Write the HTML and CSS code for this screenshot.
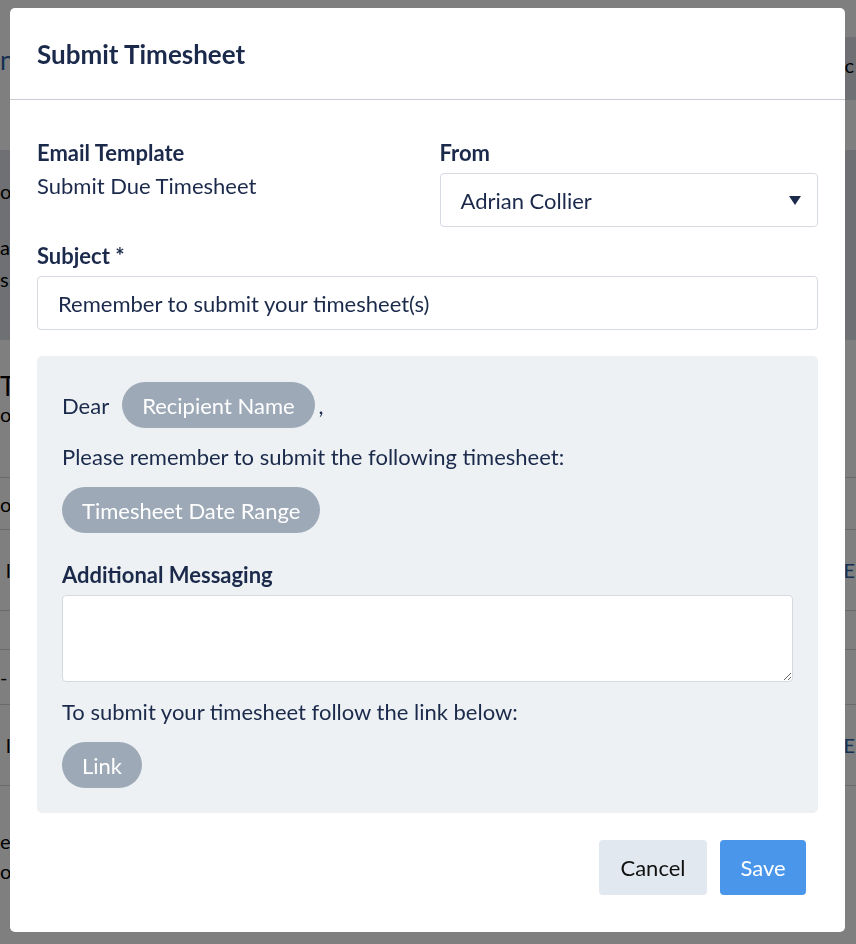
FILE: index.html
```html
<!DOCTYPE html>
<html lang="en">
<head>
  <meta charset="UTF-8" />
  <meta name="viewport" content="width=device-width, initial-scale=1.0"/>
  <title>Submit Timesheet</title>
  <link rel="stylesheet" href="styles.css">
</head>
<body>

  <!-- page behind the dialog -->
  <div class="page">
    <header class="page-head">
      <span class="page-title">n</span>
      <span class="page-tab">c</span>
    </header>

    <section class="page-band">
      <p>o</p>
      <p>a</p>
      <p>s</p>
    </section>

    <section class="page-list">
      <div class="list-head">
        <span class="list-title">T</span>
        <span>o</span>
      </div>
      <div class="list-row row-a"><span>o</span></div>
      <div class="list-row row-b"><span class="row-mark">l</span><span class="row-link">E</span></div>
      <div class="list-row row-c"></div>
      <div class="list-row row-d"><span>-</span></div>
      <div class="list-row row-b"><span class="row-mark">l</span><span class="row-link">E</span></div>
      <div class="list-row row-e"><span>e<br>o</span></div>
    </section>
  </div>

  <!-- dialog -->
  <div class="overlay">
    <div class="modal">
      <div class="modal-head">
        <h2 class="modal-title">Submit Timesheet</h2>
      </div>

      <div class="modal-body">
        <div class="meta">
          <div>
            <span class="field-label">Email Template</span>
            <div class="field-value">Submit Due Timesheet</div>
          </div>
          <div>
            <span class="field-label">From</span>
            <div class="select">
              <span>Adrian Collier</span>
              <svg width="12" height="9" viewBox="0 0 12 9"><path d="M0 0h12L6 9z" fill="#1b2a4b"/></svg>
            </div>
          </div>
        </div>

        <div class="subject-field">
          <span class="field-label">Subject *</span>
          <div class="input">Remember to submit your timesheet(s)</div>
        </div>

        <div class="template">
          <div class="dear-row">
            <span>Dear</span>
            <span class="chip">Recipient Name</span>
            <span class="comma">,</span>
          </div>
          <p>Please remember to submit the following timesheet:</p>
          <span class="chip">Timesheet Date Range</span>

          <span class="field-label extra-label">Additional Messaging</span>
          <textarea class="textarea"></textarea>

          <p>To submit your timesheet follow the link below:</p>
          <span class="chip">Link</span>
        </div>
      </div>

      <div class="modal-foot">
        <button class="btn btn-cancel" type="button">Cancel</button>
        <button class="btn btn-save" type="button">Save</button>
      </div>
    </div>
  </div>

</body>
</html>
```

FILE: styles.css
```css
body {
  margin: 0;
  font-family: 'Lato', 'Liberation Sans', sans-serif;
  font-size: 22px;
  color: #1b2a4b;
  background: #fff;
}

/* background page */
.page { overflow: hidden; height: 944px; font-size: 20px; color: #000; }
.page-head {
  height: 100px;
  display: flex;
  justify-content: space-between;
  align-items: flex-end;
}
.page-title {
  margin: 0 0 24px 0;
  font-size: 26px;
  color: #2d5fa6;
}
.page-tab {
  height: 63px;
  width: 40px;
  box-sizing: border-box;
  background: #dde1e6;
  line-height: 56px;
  text-align: right;
  padding-right: 2px;
}
.page-band {
  margin-top: 50px;
  height: 190px;
  background: #dde1e6;
  padding: 28px 0 0;
  box-sizing: border-box;
}
.page-band p { margin: 0 0 6px; line-height: 26px; }
.page-band p:first-child { margin-bottom: 30px; }
.list-head {
  height: 138px;
  border-bottom: 1px solid #d0d5dc;
  padding-top: 30px;
  box-sizing: border-box;
  display: flex;
  flex-direction: column;
}
.list-title { font-size: 26px; }
.list-row {
  border-bottom: 1px solid #d0d5dc;
  box-sizing: border-box;
  display: flex;
  align-items: center;
  justify-content: space-between;
}
.row-a { height: 52px; }
.row-b { height: 81px; }
.row-c { height: 39px; }
.row-d { height: 55px; }
.row-e { height: 158px; align-items: flex-start; padding-top: 40px; line-height: 30px; border-bottom: none; }
.row-mark { margin-left: 6px; }
.row-link { color: #2d5fa6; margin-right: 1px; }

/* dialog */
.overlay {
  position: fixed;
  inset: 0;
  background: rgba(0, 0, 0, 0.5);
}
.modal {
  width: 835px;
  margin: 8px 0 0 10px;
  background: #fff;
  border-radius: 5px;
}
.modal-head {
  height: 91px;
  padding: 0 27px;
  display: flex;
  align-items: center;
  border-bottom: 1px solid #c8cdd4;
}
.modal-title {
  margin: 0;
  font-size: 26px;
  font-weight: 700;
}
.modal-body { padding: 40px 27px 0; }
.meta {
  display: grid;
  grid-template-columns: 1fr 1fr;
  column-gap: 24px;
}
.field-label {
  display: block;
  font-weight: 700;
  line-height: 26px;
  margin-bottom: 7px;
}
.field-value { line-height: 26px; margin-top: 2px; }
.select, .input {
  height: 54px;
  box-sizing: border-box;
  border: 1px solid #d5dae1;
  border-radius: 4px;
  display: flex;
  align-items: center;
  padding: 0 16px 0 20px;
}
.select { justify-content: space-between; }
.subject-field { margin-top: 16px; }

.template {
  margin-top: 26px;
  background: #edf1f4;
  border-radius: 5px;
  padding: 26px 25px 25px;
}
.chip {
  display: inline-flex;
  align-items: center;
  height: 46px;
  padding: 0 20px;
  border-radius: 23px;
  background: #9da9b7;
  color: #fff;
  vertical-align: top;
}
.dear-row { display: flex; align-items: center; }
.dear-row .chip { margin-left: 13px; }
.comma { margin-left: 4px; }
.template p { margin: 16px 0 17px; line-height: 26px; }
.template p:last-of-type { margin-top: 17px; }
.extra-label { margin-top: 29px; }
.textarea {
  display: block;
  width: 100%;
  height: 87px;
  box-sizing: border-box;
  border: 1px solid #d5dae1;
  border-radius: 4px;
  background: #fff;
  font-family: inherit;
  font-size: 20px;
  resize: vertical;
}

.modal-foot {
  display: flex;
  justify-content: flex-end;
  gap: 13px;
  padding: 27px 39px 37px 27px;
}
.btn {
  height: 55px;
  border: none;
  border-radius: 4px;
  font-family: inherit;
  font-size: 22px;
  padding: 0 20px;
  cursor: pointer;
}
.btn-cancel { background: #e2e8ef; color: #111; width: 108px; }
.btn-save { background: #4a96eb; color: #fff; width: 86px; }
```
